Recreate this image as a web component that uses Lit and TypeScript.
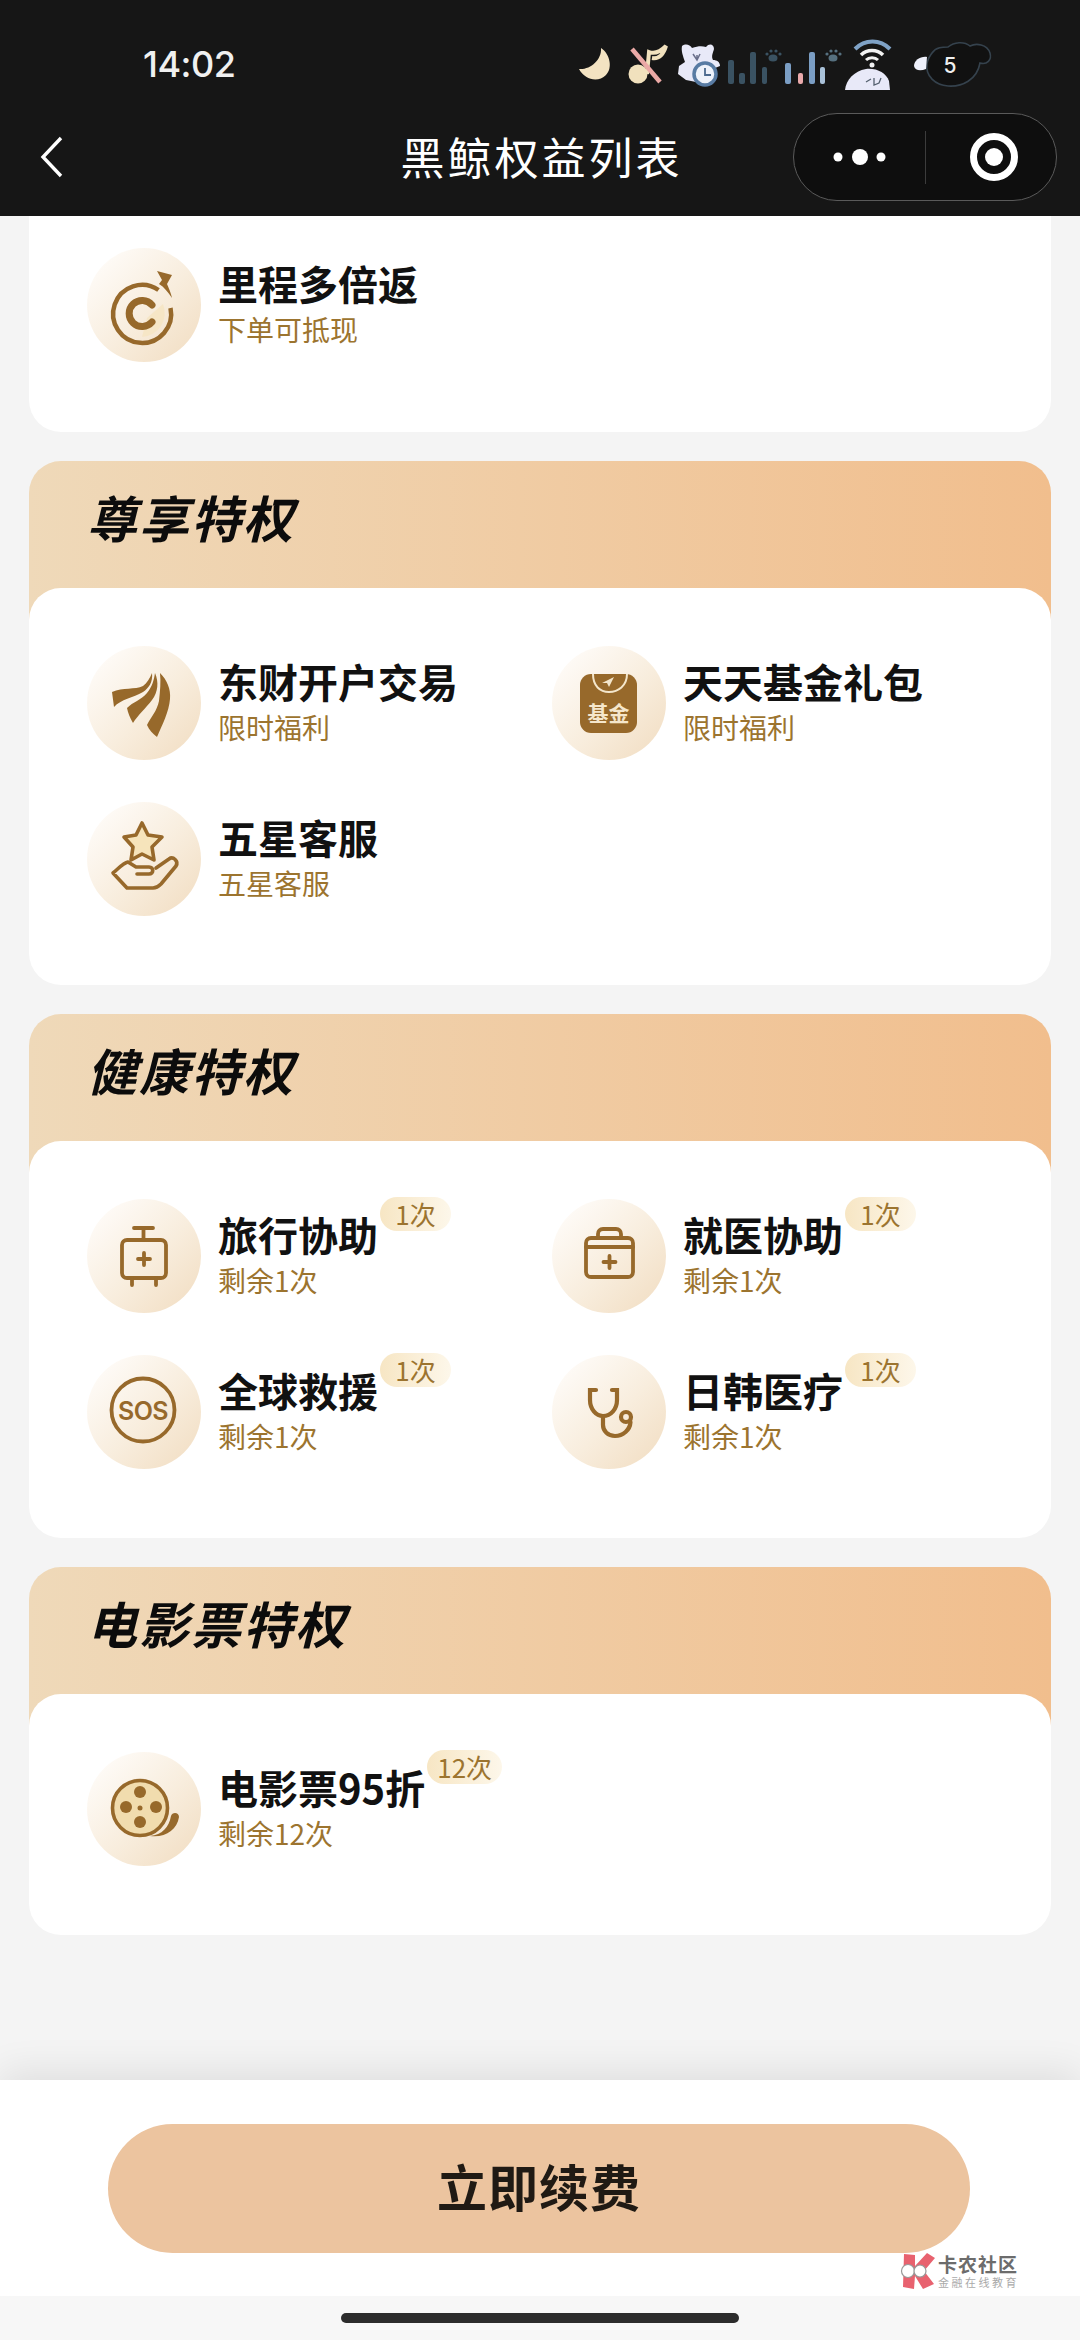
import { LitElement, html, css } from "lit";
import { customElement } from "lit/decorators.js";

const C = "#97692b";

const I: Record<string, () => unknown> = {
  mile: () => html`<svg class="ic" viewBox="0 0 114 114" width="114" height="114" fill="none">
    <path d="M55 89A24 24 0 0 0 76 56L60 70Z" fill="#f6e6c6"/>
    <path d="M71.500 42A29 29 0 1 0 83.500 60" stroke="${C}" stroke-width="4.500"/>
    <path d="M65 57A13 13 0 1 0 65 74" stroke="${C}" stroke-width="7" stroke-linecap="round"/>
    <path d="M70 23L85 27L80 36C82 41 84 45 85 50C81 44 77 39 72 36L75 32Z" fill="${C}"/>
  </svg>`,
  east: () => html`<svg class="ic" viewBox="0 0 114 114" width="114" height="114">
    <path fill="${C}" d="M25 46C36 41 48 44 56 40C60 37 63 32 65 27C66 36 62 42 56 46C46 52 34 53 27 61Z"/>
    <path fill="${C}" d="M68 27C72 36 71 46 65 54C59 62 51 69 46 77C43 72 41 67 40 62C46 56 54 54 60 47C65 41 67 34 68 27Z"/>
    <path fill="${C}" d="M73 27C80 34 84 43 83 53C82 66 75 79 70 91C66 88 62 84 60 79C64 71 70 65 72 55C73 45 74 36 73 27Z"/>
  </svg>`,
  fund: () => html`<svg class="ic" viewBox="0 0 114 114" width="114" height="114">
    <rect x="28" y="28" width="57" height="59" rx="11" fill="${C}"/>
    <path d="M41 28C41 40 48 46 57 46C66 46 75 40 75 28" fill="none" stroke="#f4e6cb" stroke-width="2"/>
    <path d="M50 37L62 31L60 35L57 41L55 37Z" fill="#f4e6cb"/>
    <text x="56.5" y="75" text-anchor="middle" class="fundt">基金</text>
  </svg>`,
  star: () => html`<svg class="ic" viewBox="0 0 114 114" width="114" height="114" fill="none" stroke="${C}" stroke-width="3.6" stroke-linejoin="round" stroke-linecap="round">
    <path fill="#f6e4bb" d="M55 21L61 33L75 35L65 45L67 58L55 52L44 58L46 45L37 35L49 33Z"/>
    <path d="M50 72H62C67 72 67 65 62 65H49L41 60C36 61 31 67 26 71L40 86H66C70 86 72 84 74 82L89 64C92 59 86 54 82 57L69 66"/>
  </svg>`,
  bag: () => html`<svg class="ic" viewBox="0 0 114 114" width="114" height="114" fill="none" stroke="${C}" stroke-width="3.8" stroke-linecap="round">
    <rect x="35" y="41" width="44" height="38" rx="5"/>
    <path d="M47 29H66M56.500 29V41M45 79V86M69 79V86"/>
    <path d="M57 54V66M51 60H63"/>
  </svg>`,
  kit: () => html`<svg class="ic" viewBox="0 0 114 114" width="114" height="114" fill="none" stroke="${C}" stroke-width="3.8" stroke-linecap="round">
    <rect x="34" y="39" width="47" height="39" rx="5"/>
    <path d="M34 48H81"/>
    <path d="M46 39V35C46 32 48 30 51 30H64C67 30 69 32 69 35V39"/>
    <path d="M57.500 57V69M51.500 63H63.500"/>
  </svg>`,
  sos: () => html`<svg class="ic" viewBox="0 0 114 114" width="114" height="114" fill="none">
    <circle cx="56" cy="55" r="31.500" stroke="${C}" stroke-width="3.800"/>
    <text x="56" y="64.500" text-anchor="middle" class="sost">SOS</text>
  </svg>`,
  steth: () => html`<svg class="ic" viewBox="0 0 114 114" width="114" height="114" fill="none" stroke="${C}" stroke-width="4.200" stroke-linecap="round">
    <path d="M44 35H38V45C38 54 44 61 51 61C59 61 65 54 65 45V35H60"/>
    <path d="M51 61V70C51 76 56 81 63 81C71 81 78 75 78.500 67"/>
    <circle cx="74" cy="62" r="5"/>
  </svg>`,
  film: () => html`<svg class="ic" viewBox="0 0 114 114" width="114" height="114">
    <circle cx="53" cy="56" r="27.500" fill="#f1dcae" stroke="${C}" stroke-width="3.600"/>
    <g fill="${C}">
      <circle cx="53" cy="40" r="6"/><circle cx="53" cy="70" r="6"/>
      <circle cx="39" cy="55" r="6"/><circle cx="69" cy="55" r="6"/>
      <circle cx="53" cy="56" r="2.500"/>
      <path d="M63 84C75 83 82 75 84 64C85 60 92 60 92 65C90 78 78 86 63 84Z"/>
    </g>
  </svg>`,
};

type Item = { icon: string; title: string; sub: string; chip?: string };
const sections: { name: string; items: Item[] }[] = [
  { name: "尊享特权", items: [
    { icon: "east", title: "东财开户交易", sub: "限时福利" },
    { icon: "fund", title: "天天基金礼包", sub: "限时福利" },
    { icon: "star", title: "五星客服", sub: "五星客服" },
  ] },
  { name: "健康特权", items: [
    { icon: "bag", title: "旅行协助", sub: "剩余1次", chip: "1次" },
    { icon: "kit", title: "就医协助", sub: "剩余1次", chip: "1次" },
    { icon: "sos", title: "全球救援", sub: "剩余1次", chip: "1次" },
    { icon: "steth", title: "日韩医疗", sub: "剩余1次", chip: "1次" },
  ] },
  { name: "电影票特权", items: [
    { icon: "film", title: "电影票95折", sub: "剩余12次", chip: "12次" },
  ] },
];

@customElement("app-root")
export class AppRoot extends LitElement {
  static styles = css`
    :host { display: block; width: 1080px; height: 2340px; background: #f4f4f4; overflow: hidden;
      font-family: "Noto Sans CJK SC", "Noto Sans", sans-serif; }
    .page { display: flex; flex-direction: column; height: 2340px; }
    header { height: 216px; background: #161616; color: #fff; flex: none; }
    .status { height: 68px; padding: 30px 0 0 143px; display: flex; justify-content: space-between; }
    .time { font: 500 36px/68px Inter, sans-serif; color: #f0f0f0; letter-spacing: -0.5px; }
    .status svg { margin-right: 80px; flex: none; }
    .bar { height: 118px; padding: 0 23px; display: grid; grid-template-columns: 1fr auto 1fr; align-items: center; }
    .back { margin-left: 17px; display: block; }
    .ttl { font-size: 44px; letter-spacing: 3px; line-height: 60px; font-weight: 400; margin: -2px -3px 0 0; }
    .capsule { justify-self: end; width: 264px; height: 88px; box-sizing: border-box; border: 1px solid #5a5a5a;
      border-radius: 44px; background: #0e0e0e; display: block; }
    .capsule svg { display: block; }
    main { flex: 1; padding: 0 29px; display: flex; flex-direction: column; gap: 29px; overflow: hidden; }
    .body { background: #fff; border-radius: 32px; padding: 58px 58px 69px; display: grid;
      grid-template-columns: 465px 440px; row-gap: 42px; position: relative; }
    .first { border-radius: 0 0 32px 32px; padding: 32px 58px 70px; }
    .head { height: 159px; border-radius: 32px 32px 0 0; background: linear-gradient(90deg, #efd9b9, #f1be8d);
      padding-left: 58px; box-sizing: border-box; margin-bottom: -32px; }
    .head h2 { margin: 0; font-size: 50px; line-height: 111px; font-style: italic; font-weight: 700; color: #0c0c0c; letter-spacing: 2px; }
    .row { display: flex; gap: 17px; height: 114px; align-items: center; }
    .circle { width: 114px; height: 114px; border-radius: 50%; flex: none;
      background: linear-gradient(135deg, #fffdfb 5%, #f8eddd 55%, #f1dcc0 100%); }
    .ic { display: block; }
    .fundt { font: 700 21px "Noto Sans CJK SC", sans-serif; fill: #f5e6cb; }
    .sost { font: 600 25px Inter, sans-serif; fill: #97692b; letter-spacing: -0.5px; }
    .txt { display: flex; flex-direction: column; margin-bottom: 3px; }
    .t { position: relative; align-self: flex-start; font-size: 40px; line-height: 51px; font-weight: 700; color: #111; white-space: nowrap; }
    .s { font-size: 28px; line-height: 41px; color: #9c742f; }
    .chip { position: absolute; left: calc(100% + 2px); top: -12px; height: 34px; min-width: 71px; padding: 0 10px; box-sizing: border-box;
      border-radius: 17px; background: linear-gradient(90deg, #f7e6c4, #fdf7ea); color: #9c742f; font-size: 26px; font-weight: 400;
      line-height: 34px; text-align: center; }
    footer { flex: none; position: relative; box-shadow: 0 -8px 36px rgba(0,0,0,.09); }
    .action { height: 216px; background: #fff; padding: 44px 110px 0 108px; box-sizing: border-box; }
    .btn { height: 129px; width: 862px; border-radius: 65px; background: #ecc49f; color: #201a14; font-size: 50px; font-weight: 700;
      display: flex; align-items: center; justify-content: center; letter-spacing: 1px; padding-bottom: 7px; box-sizing: border-box; }
    .home { height: 44px; background: #f7f7f7; display: flex; justify-content: center; padding-top: 17px; box-sizing: border-box; }
    .home i { display: block; width: 398px; height: 10px; border-radius: 5px; background: #2c2c2c; }
    .mark { position: absolute; left: 900px; top: 173px; display: flex; gap: 3px; align-items: flex-start; }
    .mark b { display: block; font-size: 19px; line-height: 22px; color: #6c6c6c; font-weight: 700; letter-spacing: 1px; white-space: nowrap; }
    .mark span { display: block; font-size: 11px; line-height: 14px; color: #aaa; letter-spacing: 2.500px; white-space: nowrap; }
  `;

  private row(it: Item) {
    return html`<div class="row">
      <div class="circle">${I[it.icon]()}</div>
      <div class="txt">
        <div class="t">${it.title}${it.chip ? html`<span class="chip">${it.chip}</span>` : ""}</div>
        <div class="s">${it.sub}</div>
      </div>
    </div>`;
  }

  render() {
    return html`<div class="page">
      <header>
        <div class="status">
          <div class="time">14:02</div>
          <svg width="430" height="70" viewBox="0 0 430 70">
            <path fill="#f3e3c2" d="M9 39C20 40 32 30 31 18C40 24 43 38 36 45C28 53 15 50 9 39Z"/>
            <circle cx="68" cy="44" r="9.500" fill="#f1e1bd"/>
            <path d="M77 44L79 22C84 24 90 22 96 16C93 26 88 29 82 28" fill="none" stroke="#f1e1bd" stroke-width="4"/>
            <path d="M62 19L90 52" stroke="#eba9a6" stroke-width="4.500"/>
            <path fill="#e8e9f8" d="M112 16C116 13 120 15 122 18C128 16 132 16 136 17C139 13 144 14 144 19C143 23 141 26 143 30C147 30 150 32 150 36L140 40L126 52L116 50L108 44L109 36L115 32C113 26 111 21 112 16Z"/>
            <path d="M123 24L127 30L130 24M127 30V25" stroke="#6a6f8a" stroke-width="1.500" fill="none"/>
            <circle cx="135" cy="44" r="11" fill="#eef2fa" stroke="#587ba3" stroke-width="3.500"/>
            <path d="M135 38V45H141" fill="none" stroke="#4c6a8e" stroke-width="1.800"/>
            <g fill="#3a5262">
              <rect x="158" y="30" width="6" height="24" rx="2"/><rect x="169" y="43" width="6" height="11" rx="2"/>
              <rect x="180" y="22" width="6" height="32" rx="2"/><rect x="192" y="37" width="5" height="17" rx="2"/>
              <ellipse cx="203" cy="28" rx="4.500" ry="3.500"/><circle cx="197" cy="24" r="1.600"/><circle cx="201" cy="21" r="1.600"/><circle cx="206" cy="21" r="1.600"/><circle cx="210" cy="24" r="1.600"/>
            </g>
            <g fill="#7b9ec4">
              <rect x="215" y="33" width="6" height="21" rx="2"/>
              <rect x="239" y="22" width="6" height="32" rx="2"/>
              <rect x="250" y="37" width="5" height="17" rx="2" fill="#a9c1d8"/>
            </g>
            <rect x="228" y="43" width="5" height="11" rx="2" fill="#eaa9ab"/>
            <g fill="#56707f">
              <ellipse cx="263" cy="28" rx="4.500" ry="3.500"/><circle cx="257" cy="24" r="1.600"/><circle cx="261" cy="21" r="1.600"/><circle cx="266" cy="21" r="1.600"/><circle cx="270" cy="24" r="1.600"/>
            </g>
            <path d="M285 19C295 9 310 9 320 19" fill="none" stroke="#7fa2c6" stroke-width="4"/>
            <path d="M291 25C297 19 307 19 313 25" fill="none" stroke="#f2f2f2" stroke-width="3.500"/>
            <path d="M296 30C299 27 305 27 308 30" fill="none" stroke="#f2f2f2" stroke-width="3"/>
            <circle cx="302" cy="35" r="2.500" fill="#f2f2f2"/>
            <path fill="#e8e9f8" d="M275 60C276 50 284 41 296 39C307 38 316 43 319 51L320 60Z"/>
            <path d="M296 52L301 49M304 48V55L309 53L311 48" fill="none" stroke="#54606e" stroke-width="1.300"/>
            <path d="M362 23C366 17 373 17 378 17C384 12 394 11 400 16C406 13 417 14 420 23C422 30 417 35 410 33C407 50 392 57 378 56C366 55 355 47 357 33C358 28 360 26 362 23Z" fill="#111" stroke="#35424d" stroke-width="1.600"/>
            <path d="M344 36C344 30 351 26 357 27L356 39C351 41 345 41 344 36Z" fill="#eef0fb"/>
            <text x="380" y="43" text-anchor="middle" font-family="Inter, sans-serif" font-size="21" font-weight="500" fill="#efefef">5</text>
          </svg>
        </div>
        <div class="bar">
          <svg class="back" width="24" height="42" viewBox="0 0 24 42"><path d="M21 2L3 21L21 40" fill="none" stroke="#fff" stroke-width="3.400"/></svg>
          <div class="ttl">黑鲸权益列表</div>
          <div class="capsule">
            <svg width="262" height="86" viewBox="0 0 262 86">
              <g fill="#fff"><circle cx="44" cy="43" r="4.500"/><circle cx="66" cy="43" r="8"/><circle cx="87" cy="43" r="4.500"/></g>
              <path d="M131.500 17V70" stroke="#3c3c3c" stroke-width="1"/>
              <circle cx="200" cy="43" r="20.500" fill="none" stroke="#fff" stroke-width="7"/>
              <circle cx="200" cy="43" r="9" fill="#fff"/>
            </svg>
          </div>
        </div>
      </header>
      <main>
        <div class="body first">${this.row({ icon: "mile", title: "里程多倍返", sub: "下单可抵现" })}</div>
        ${sections.map((s) => html`<section>
          <div class="head"><h2>${s.name}</h2></div>
          <div class="body">${s.items.map((i) => this.row(i))}</div>
        </section>`)}
      </main>
      <footer>
        <div class="action"><div class="btn">立即续费</div></div>
        <div class="home"><i></i></div>
        <div class="mark">
          <svg width="35" height="36" viewBox="0 0 35 36">
            <path fill="#e8626f" d="M4 1L15 2L15 13L27 0L35 5L24 18L34 31L23 36L15 23L14 36L3 34Z"/>
            <circle cx="8" cy="18" r="6.500" fill="#fff" stroke="#999" stroke-width="1.200"/>
            <circle cx="20" cy="18" r="6" fill="#fff" stroke="#999" stroke-width="1.200"/>
          </svg>
          <div><b>卡农社区</b><span>金融在线教育</span></div>
        </div>
      </footer>
    </div>`;
  }
}
